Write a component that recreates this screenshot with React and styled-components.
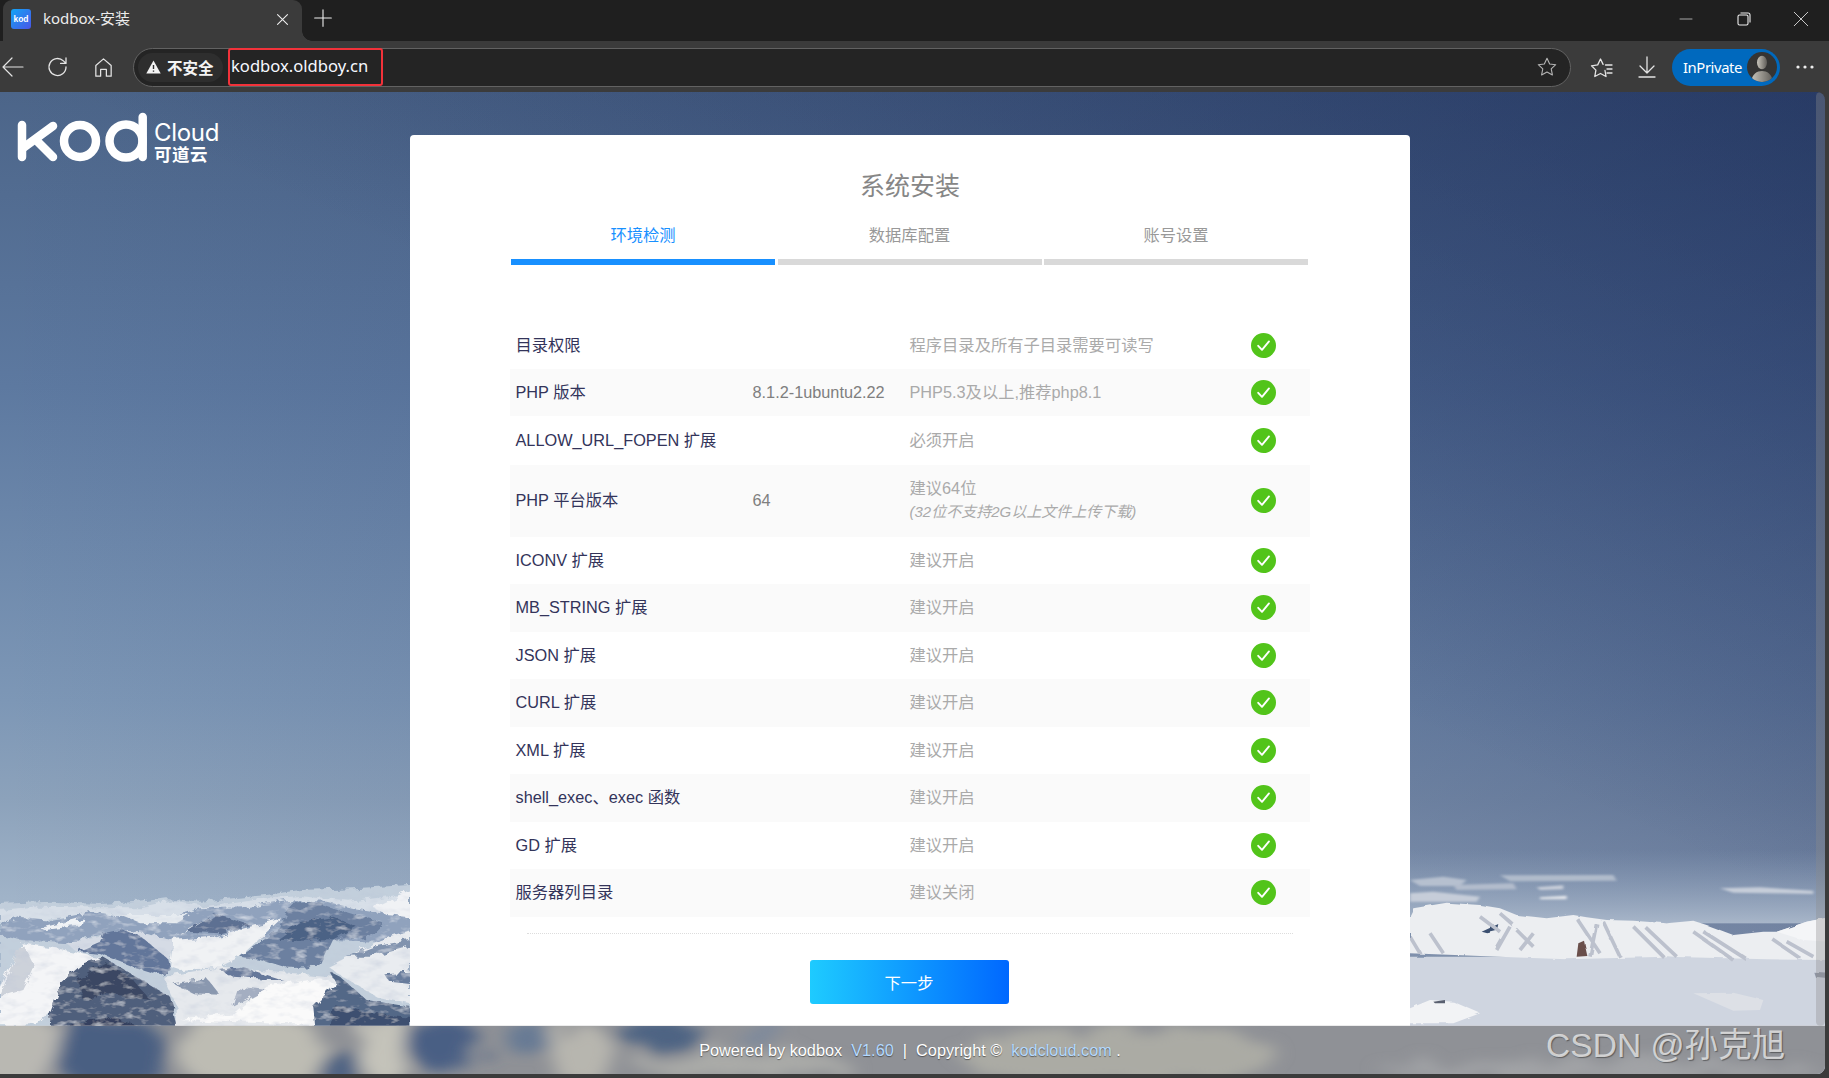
import React from "react";
import styled, { createGlobalStyle } from "styled-components";

const Global = createGlobalStyle`
  html, body { margin: 0; padding: 0; height: 100%; background: #3b3b3b; overflow: hidden; }
  * { box-sizing: border-box; }
  body { font-family: "Liberation Sans", "Noto Sans CJK SC", sans-serif; }
`;

const Browser = styled.div`
  width: 1829px; height: 1078px; display: flex; flex-direction: column; background: #3b3b3b; overflow: hidden;
`;

/* ---------- tab strip ---------- */
const TabStrip = styled.div`
  height: 41px; background: #1f1f1f; display: flex; align-items: stretch; padding-left: 3px; flex: none;
`;
const Tab = styled.div`
  width: 299px; background: #3b3b3b; border-radius: 9px 9px 0 0; display: flex; align-items: center;
  padding: 0 10px 3px 8px; position: relative; color: #ececec; font-size: 15px;
  font-family: "Noto Sans", "Noto Sans CJK SC", sans-serif;
  &::after {
    content: ""; position: absolute; right: -10px; bottom: 0; width: 10px; height: 10px;
    background: radial-gradient(circle at 100% 0, #1f1f1f 9.5px, #3b3b3b 10px);
  }
`;
const Favicon = styled.div`
  width: 20px; height: 20px; border-radius: 3px; background: linear-gradient(135deg, #12a5f5, #4a55e8);
  color: #fff; font: bold 8.5px/20px "Liberation Sans", sans-serif; text-align: center; margin-right: 12px; flex: none;
`;
const TabTitle = styled.span` flex: 1; margin-top: -3px; `;
const TabIcon = styled.button`
  width: 20px; height: 20px; padding: 0; background: none; border: 0; display: flex; align-items: center; justify-content: center; color: #f0f0f0;
`;
const NewTab = styled.button`
  width: 20px; height: 20px; margin: 8px 0 0 11px; padding: 0; border: 0; background: none; color: #f0f0f0;
  display: flex; align-items: center; justify-content: center;
`;
const WindowControls = styled.div` margin-left: auto; margin-right: -1px; display: flex; `;
const WindowButton = styled.button`
  width: 57.5px; height: 38px; border: 0; padding: 0; background: none; color: #eee; display: flex; align-items: center; justify-content: center;
`;

/* ---------- toolbar ---------- */
const Toolbar = styled.div`
  height: 51px; background: #3b3b3b; display: flex; align-items: center; flex: none; padding-top: 1px;
`;
const NavButton = styled.button`
  width: ${p => p.$w}px; height: 36px; border: 0; padding: 0; background: none; color: #e4e4e4;
  display: flex; align-items: center; justify-content: center; flex: none;
`;
const AddressBar = styled.div`
  width: 1438px; margin-left: 17px; height: 39px; flex: none; background: #242424; border: 1.5px solid #626262; border-radius: 20px;
  display: flex; align-items: center; padding: 0 12px 0 4px; position: relative;
`;
const SecurityChip = styled.div`
  width: 85px; height: 29px; border-radius: 15px; background: #2e2e2e; display: flex; align-items: center; gap: 6px; padding-left: 8px;
  color: #f4f4f4; font: bold 15.5px "Noto Sans CJK SC", sans-serif; flex: none; white-space: nowrap;
`;
const UrlBox = styled.div`
  margin-left: 5px; width: 155px; height: 38px; border: 2px solid #f2323a; border-radius: 3px; display: flex; align-items: center; padding: 0 0 3px 1px;
  color: #f6f8ff; font: 16.6px "Noto Sans", sans-serif; flex: none;
`;
const StarSlot = styled.div` margin-left: auto; color: #b5b5b5; display: flex; `;
const Pill = styled.div`
  margin-left: 11px; width: 108px; height: 37px; border-radius: 19px; background: #0069be; display: flex; align-items: center; justify-content: space-between;
  padding: 0 3px 0 11px; color: #fff; font: 14.8px "Noto Sans", sans-serif; flex: none; letter-spacing: -0.4px;
`;
const Avatar = styled.div`
  width: 30px; height: 30px; border-radius: 50%; background: #353433; overflow: hidden; flex: none;
`;

/* ---------- page ---------- */
const Viewport = styled.main`
  width: 1825px; height: 982px; position: relative; overflow: hidden; border-radius: 0 8px 8px 0; flex: none;
  padding: 43px 5px 0 0; display: flex; justify-content: center;
  background:
    linear-gradient(205deg, rgba(15,30,75,.38) 0%, rgba(15,30,75,0) 45%),
    linear-gradient(90deg, rgba(20,35,80,0) 0%, rgba(20,35,85,.14) 45%, rgba(15,30,80,.34) 100%),
    linear-gradient(180deg, #4c6589 0%, #5d79a0 30%, #7d97b6 62%, #8ca2bb 72%, #a0b3c8 82%, #b5c4d5 100%);
`;
const Scenery = styled.svg`
  position: absolute; bottom: -4px; left: ${p => p.$left}px;
`;
const ScrollThumb = styled.div`
  position: absolute; top: 0; right: 0; width: 9px; height: 934px; background: rgba(140,140,140,.35); border-radius: 5px;
`;
const Logo = styled.div`
  position: absolute; left: 17px; top: 20px; display: flex; align-items: flex-start; color: #fff;
`;
const LogoText = styled.div`
  margin: 9px 0 0 5px; display: flex; flex-direction: column; color: #fff;
`;
const LogoCloud = styled.span` font: 24px/24px "Inter", "Liberation Sans", sans-serif; letter-spacing: -0.3px; `;
const LogoCn = styled.span` font: bold 17.5px/18px "Noto Sans CJK SC", sans-serif; letter-spacing: .5px; `;

const Card = styled.section`
  width: 1000px; height: 1000px; background: #fff; border-radius: 4px; padding: 26px 100px 0; position: relative; flex: none;
`;
const Title = styled.h1`
  margin: 0; height: 49px; text-align: center; color: #868686; font-size: 25px; line-height: 50px; font-weight: 400;
`;
const Steps = styled.div`
  display: grid; grid-template-columns: repeat(3, 264px); gap: 2.5px; margin-left: 1px;
`;
const Step = styled.div`
  height: 55px; padding-top: 9px; text-align: center; font-size: 16.3px; line-height: 33px;
  color: ${p => (p.$active ? "#1890ff" : "#999")};
  border-bottom: 6px solid ${p => (p.$active ? "#1890ff" : "#d9d9d9")};
`;
const Checks = styled.div` margin-top: 57px; `;
const Row = styled.div`
  height: ${p => p.$h}px; display: grid; grid-template-columns: 237px 157px 1fr 25px; align-items: center; padding: 0 34px 0 5.5px;
  background: ${p => (p.$shade ? "#fafafa" : "#fff")}; font-size: 16.3px;
`;
const Label = styled.div` color: #33345a; white-space: nowrap; margin-top: -3px; `;
const Value = styled.div` color: #7f7f7f; white-space: nowrap; margin-top: -1px; `;
const Desc = styled.div` color: #aaa; white-space: nowrap; line-height: 24px; margin-top: -1px; `;
const DescNote = styled.div` font-style: italic; font-size: 15px; `;
const Divider = styled.div` margin: 16.5px 17px 0; border-top: 1px dotted #ddd; `;
const NextButton = styled.button`
  display: block; margin: 26px 0 0 299.5px; width: 199px; height: 44px; border: 0; border-radius: 3px; color: #fff; font: 16.3px "Liberation Sans", "Noto Sans CJK SC", sans-serif;
  background: linear-gradient(90deg, #1ecbff, #0068ff);
`;

const Footer = styled.footer`
  position: absolute; left: 0; right: 0; bottom: 0; height: 49px; overflow: hidden; display: flex; align-items: center; justify-content: center;
  color: #fff; font-size: 16.3px; text-shadow: 0 1px 1px rgba(0,0,0,.45); padding-right: 5px; white-space: pre;
  border-top: 1px solid rgba(200,200,200,.35);
`;
const FooterArt = styled.svg` position: absolute; inset: 0; `;
const FooterText = styled.div` position: relative; `;
const FooterLink = styled.span` color: #b4d9ff; `;
const Watermark = styled.div`
  position: absolute; left: 1546px; top: 934px; color: rgba(232,232,232,.82); font: 33.6px/40px "Liberation Sans", "Noto Sans CJK SC", sans-serif; white-space: nowrap;
  text-shadow: 1px 1px 1px rgba(50,50,50,.55);
`;

/* ---------- drawings ---------- */
const Ico = ({ size = 22, sw = 1.4, children, vb = 24 }) => (
  <svg width={size} height={size} viewBox={`0 0 ${vb} ${vb}`} fill="none" stroke="currentColor" strokeWidth={sw} strokeLinecap="round" strokeLinejoin="round">{children}</svg>
);

const Check = () => (
  <svg width="25" height="25" viewBox="0 0 25 25">
    <circle cx="12.5" cy="12.5" r="12.5" fill="#52c41a" />
    <path d="M7.2 12.8l3.8 4 7-8.4" fill="none" stroke="#fff" strokeWidth="1.9" strokeLinecap="round" strokeLinejoin="round" />
  </svg>
);

const KodLogo = () => (
  <svg width="132" height="50" viewBox="0 0 132 50" fill="none" stroke="#fff" strokeWidth="8.5" strokeLinecap="round" strokeLinejoin="round">
    <path d="M5 13 V45" />
    <path d="M36 14 L6 36 M19 28 L36 45" />
    <circle cx="63" cy="29" r="16" />
    <circle cx="109" cy="29" r="16.5" />
    <path d="M125.7 5 V45" />
  </svg>
);

const left = [
  ["#c2cfdc", "0,312 150,305 300,312 420,305 500,295 600,305 700,295 800,285 900,270 1060,265 1230,255 1230,834 0,834"],
  ["#d7dfe8", "0,330 100,320 260,322 420,322 520,300 620,322 780,298 900,288 1050,305 1230,280 1230,360 1000,340 700,350 400,360 200,350 0,370"],
  ["#90a2bd", "0,375 60,350 150,360 280,335 340,345 420,345 520,350 600,325 740,322 860,300 980,305 1060,325 1230,350 1230,430 1000,420 820,410 700,420 520,420 440,400 360,390 200,430 60,420 0,405"],
  ["#f0f3f6", "120,385 250,352 245,376 135,390"],
  ["#e6ebf0", "360,345 430,345 570,345 530,370 420,370"],
  ["#5d7092", "560,395 640,340 750,375 660,400"],
  ["#f3f5f7", "530,410 640,345 560,395"],
  ["#d5dbe5", "200,430 300,410 360,390 440,400 520,420 500,520 400,480 300,460 230,455"],
  ["#62769a", "310,400 365,388 425,412 505,478 512,510 480,525 400,500 300,462 232,455 300,425"],
  ["#f4f5f7", "0,560 65,430 170,445 305,475 190,540 150,640 110,676 0,676"],
  ["#cdd2da", "0,590 55,440 75,440 105,500 70,570"],
  ["#f0f2f4", "510,500 520,420 640,410 845,355 720,470 660,500 540,510"],
  ["#6c80a0", "720,470 840,385 870,310 930,302 1050,340 1150,370 1110,410 1000,418 960,500 860,505 780,480"],
  ["#e9ecf0", "985,500 1140,420 1230,395 1230,612 1130,590 1030,530"],
  ["#4c6285", "830,420 900,370 1000,350 1070,380 1000,418"],
  ["#677b9c", "1150,520 1230,515 1230,552 1170,545"],
  ["#8193ae", "1040,470 1120,440 1230,420 1230,440 1110,470"],
  ["#f0f2f5", "1120,322 1230,270 1230,352 1160,345"],
  ["#e6e9ed", "490,530 660,500 1000,530 1012,550 940,620 962,834 530,834 530,620"],
  ["#fafafa", "540,660 700,640 800,560 960,535 1005,550 940,620 962,676"],
  ["#66789a", "660,510 720,500 850,540 700,530"],
  ["#8a98af", "520,550 620,535 660,585 580,580"],
  ["#a4aec1", "720,560 800,570 700,620"],
  ["#4f5e7c", "150,640 185,545 250,490 310,472 400,525 510,590 530,670 545,834 150,834"],
  ["#3a4764", "230,540 320,490 400,540 450,600 320,580 250,600"],
  ["#34415f", "170,834 200,680 330,650 500,700 540,834"],
  ["#536787", "990,515 1020,530 1100,600 1230,620 1230,700 1140,834 960,834 940,620 1010,550"],
  ["#3e4f70", "1000,610 1100,640 1230,650 1230,700 1100,834 960,834"]
];
const rightClouds = [
  ["#b6c0cf", "30,240 130,230 200,240 180,258 60,258"],
  ["#b2bccc", "160,255 340,250 350,268 170,270"],
  ["#b0bbcb", "300,226 640,225 650,242 330,244"],
  ["#c6cdd9", "30,280 100,275 240,290 230,305 30,305"],
  ["#c9cfda", "410,262 490,256 490,268 420,270"],
  ["#e3e6eb", "420,292 500,287 500,298 420,298"],
  ["#c6cdd9", "960,265 1080,262 1240,272 1240,282 1000,278"]
];
const rightGround = [
  ["#cfd5e0", "30,470 1287,470 1287,834 30,834"],
  ["#eceef1", "30,345 40,325 140,308 240,315 300,325 350,345 400,350 440,355 520,345 560,352 620,360 700,362 800,370 880,362 920,375 1000,405 1090,395 1130,395 1220,365 1287,352 1287,480 1100,478 800,470 500,478 30,460"],
  ["#f4f5f7", "1130,395 1220,365 1287,352 1287,425 1210,420"],
  ["#f2f3f5", "30,625 90,600 160,605 240,640 160,670 30,670"],
  ["#dde0e6", "880,580 1000,578 1090,600 1080,630 1000,632"],
  ["#3a4f70", "245,395 295,372 290,393 262,400"],
  ["#6a4f4c", "535,430 552,422 562,468 530,470"],
  ["#5a6070", "100,605 135,600 135,610 105,610"],
  ["#8f95a5", "1240,515 1287,518 1287,535 1245,530"]
];
const rightRidges = "M240 350L300 395M300 340L340 375M330 380L290 450M350 390L400 440M400 400L360 450M530 355L600 460M590 370L570 470M610 365L660 470M700 380L790 470M740 385L830 470M880 395L1000 480M910 395L1040 478M1120 420L1200 475M1160 425L1240 470M30 410L60 460M90 400L130 460";
const blobs = [
  [20, 25, 50, 40, "#b9b8b2"],
  [112, 28, 56, 38, "#495f82"],
  [250, 25, 75, 40, "#bdbcb3"],
  [340, 42, 22, 22, "#4f6383"],
  [385, 20, 26, 40, "#c4c3ba"],
  [446, 20, 34, 28, "#4a5f84"],
  [525, 10, 22, 16, "#687a94"],
  [580, 28, 34, 30, "#b7b6af"],
  [660, 6, 45, 12, "#4e6383"],
  [760, 6, 25, 12, "#7d899c"],
  [740, 38, 110, 14, "#aaaba8"],
  [1120, 30, 160, 30, "#ababa4"],
  [1600, 45, 220, 10, "#a1a3a6"]
];
const isRock = c => parseInt(c.slice(1, 3), 16) < 0xb0;

const App = () => {
  const rows = [
    [47, "目录权限", "", "程序目录及所有子目录需要可读写"],
    [47, "PHP 版本", "8.1.2-1ubuntu2.22", "PHP5.3及以上,推荐php8.1"],
    [48.5, "ALLOW_URL_FOPEN 扩展", "", "必须开启"],
    [72, "PHP 平台版本", "64", "建议64位", "(32位不支持2G以上文件上传下载)"],
    [47.5, "ICONV 扩展", "", "建议开启"],
    [47.5, "MB_STRING 扩展", "", "建议开启"],
    [47.5, "JSON 扩展", "", "建议开启"],
    [47.5, "CURL 扩展", "", "建议开启"],
    [47.5, "XML 扩展", "", "建议开启"],
    [47.5, "shell_exec、exec 函数", "", "建议开启"],
    [47.5, "GD 扩展", "", "建议开启"],
    [47.5, "服务器列目录", "", "建议关闭"]
  ];
  return (
    <Browser>
      <Global />
      <TabStrip>
        <Tab>
          <Favicon>kod</Favicon>
          <TabTitle>kodbox-安装</TabTitle>
          <TabIcon><Ico size={17} sw={1.5}><path d="M5 5l14 14M19 5L5 19" /></Ico></TabIcon>
        </Tab>
        <NewTab><Ico size={22} sw={1.3}><path d="M12 2v20M2 12h20" /></Ico></NewTab>
        <WindowControls>
          <WindowButton><Ico size={16} sw={1}><path d="M3 12h18" /></Ico></WindowButton>
          <WindowButton>
            <svg width="14" height="14" viewBox="0 0 14 14" fill="none" stroke="currentColor" strokeWidth="1.1"><rect x="1" y="3" width="10" height="10" rx="1.5" /><path d="M3.5 1h7.5a2 2 0 012 2v7.5" /></svg>
          </WindowButton>
          <WindowButton><Ico size={18} sw={1.1}><path d="M3 3l18 18M21 3L3 21" /></Ico></WindowButton>
        </WindowControls>
      </TabStrip>

      <Toolbar>
        <NavButton $w={26}><Ico size={24} sw={1.2}><path d="M2 12h20M11 3l-9 9 9 9" /></Ico></NavButton>
        <NavButton $w={64}><Ico size={24} sw={1.3}><path d="M20 12a8.5 8.5 0 11-2.6-6.1L20 8.4M20 3v5.4h-5.4" /></Ico></NavButton>
        <NavButton $w={26}><Ico size={23} sw={1.3}><path d="M4 21V10l8-7 8 7v11h-5v-7H9v7z" /></Ico></NavButton>
        <AddressBar>
          <SecurityChip>
            <svg width="15" height="14" viewBox="0 0 15 14"><path d="M7.5.5L14.7 13.5H.3z" fill="#f4f4f4" /><path d="M7.5 5v4M7.5 10.4v1.4" stroke="#2e2e2e" strokeWidth="1.4" /></svg>
            不安全
          </SecurityChip>
          <UrlBox>kodbox.oldboy.cn</UrlBox>
          <StarSlot><Ico size={22} sw={1.2}><path d="M12 2.5l2.9 6.2 6.6.8-4.9 4.6 1.3 6.6L12 17.4l-5.9 3.3 1.3-6.6-4.9-4.6 6.6-.8z" /></Ico></StarSlot>
        </AddressBar>
        <NavButton $w={62}>
          <svg width="24" height="24" viewBox="0 0 24 24" fill="none" stroke="currentColor" strokeWidth="1.3" strokeLinejoin="round" strokeLinecap="round"><path d="M15 15.5l1 6-5.5-3-5.7 3 1.1-6.4-4.4-4.3 6.2-.9L10.5 4l2.6 5.4M15.5 10H22M17 14h5M17 18h5" /></svg>
        </NavButton>
        <NavButton $w={28}><Ico size={24} sw={1.3}><path d="M12 2v16M5 11l7 7 7-7M4 22h16" /></Ico></NavButton>
        <Pill>
          InPrivate
          <Avatar>
            <svg width="30" height="30" viewBox="0 0 30 30">
              <defs><linearGradient id="pg" x1="0" x2="1"><stop offset="0" stopColor="#c9c5bb" /><stop offset="1" stopColor="#5f5c58" /></linearGradient></defs>
              <ellipse cx="15" cy="10.5" rx="5" ry="6.8" fill="url(#pg)" />
              <path d="M4 30c1-8 6-11 11-11s10 3 11 11z" fill="url(#pg)" />
            </svg>
          </Avatar>
        </Pill>
        <NavButton $w={49}>
          <svg width="18" height="4" viewBox="0 0 18 4" fill="#eee"><circle cx="2" cy="2" r="1.6" /><circle cx="9" cy="2" r="1.6" /><circle cx="16" cy="2" r="1.6" /></svg>
        </NavButton>
      </Toolbar>

      <Viewport>
        <Scenery $left={0} width="420" height="278" viewBox="0 0 1260 834">
          <defs>
            <filter id="rock" filterUnits="userSpaceOnUse" x="-30" y="200" width="1320" height="660">
              <feTurbulence type="fractalNoise" baseFrequency="0.035" numOctaves="4" seed="7" result="n" />
              <feDisplacementMap in="SourceGraphic" in2="n" scale="24" result="d" />
              <feGaussianBlur in="d" stdDeviation="1" result="b" />
              <feTurbulence type="fractalNoise" baseFrequency="0.025 0.05" numOctaves="3" seed="11" result="t" />
              <feColorMatrix in="t" type="matrix" values="0 0 0 0 .8  0 0 0 0 .84  0 0 0 0 .9  1.5 0 0 0 -.78" result="c" />
              <feComposite in="c" in2="b" operator="in" result="s" />
              <feGaussianBlur in="s" stdDeviation="1.5" result="s2" />
              <feMerge><feMergeNode in="b" /><feMergeNode in="s2" /></feMerge>
            </filter>
            <filter id="snow" filterUnits="userSpaceOnUse" x="-30" y="200" width="1320" height="660">
              <feTurbulence type="fractalNoise" baseFrequency="0.035" numOctaves="4" seed="7" result="n" />
              <feDisplacementMap in="SourceGraphic" in2="n" scale="24" result="d" />
              <feGaussianBlur in="d" stdDeviation="1.4" result="b" />
              <feTurbulence type="fractalNoise" baseFrequency="0.02 0.04" numOctaves="3" seed="21" result="t" />
              <feColorMatrix in="t" type="matrix" values="0 0 0 0 .5  0 0 0 0 .56  0 0 0 0 .68  .9 0 0 0 -.42" result="c" />
              <feComposite in="c" in2="b" operator="in" result="s" />
              <feGaussianBlur in="s" stdDeviation="2" result="s2" />
              <feMerge><feMergeNode in="b" /><feMergeNode in="s2" /></feMerge>
            </filter>
          </defs>
          {left.map(([c, p], i) => <polygon key={i} fill={c} points={p} filter={isRock(c) ? "url(#rock)" : "url(#snow)"} />)}
        </Scenery>
        <Scenery $left={1400} width="429" height="278" viewBox="0 0 1287 834">
          <defs>
            <filter id="soft" filterUnits="userSpaceOnUse" x="0" y="150" width="1287" height="700">
              <feTurbulence type="fractalNoise" baseFrequency="0.02" numOctaves="3" seed="3" result="n" />
              <feDisplacementMap in="SourceGraphic" in2="n" scale="10" />
              <feGaussianBlur stdDeviation="2.2" />
            </filter>
            <filter id="cloudBlur" filterUnits="userSpaceOnUse" x="0" y="150" width="1287" height="300">
              <feGaussianBlur stdDeviation="5 2.5" />
            </filter>
            <linearGradient id="floor" x1="0" y1="0" x2="0" y2="1"><stop offset="0" stopColor="#8ca0ba" stopOpacity="0" /><stop offset="1" stopColor="#a8b6c9" /></linearGradient>
          </defs>
          <rect x="0" y="150" width="1287" height="220" fill="url(#floor)" />
          <g filter="url(#cloudBlur)">
            {rightClouds.map(([c, p], i) => <polygon key={i} fill={c} points={p} />)}
          </g>
          <g filter="url(#soft)">
            {rightGround.map(([c, p], i) => <polygon key={i} fill={c} points={p} />)}
            <path d={rightRidges} stroke="#bcc1cd" strokeWidth="11" fill="none" />
          </g>
        </Scenery>

        <ScrollThumb />
        <Logo>
          <KodLogo />
          <LogoText>
            <LogoCloud>Cloud</LogoCloud>
            <LogoCn>可道云</LogoCn>
          </LogoText>
        </Logo>

        <Card>
          <Title>系统安装</Title>
          <Steps>
            <Step $active>环境检测</Step>
            <Step>数据库配置</Step>
            <Step>账号设置</Step>
          </Steps>
          <Checks>
            {rows.map(([h, a, b, c, d], i) => (
              <Row key={a} $h={h} $shade={i % 2 === 1}>
                <Label>{a}</Label>
                <Value>{b}</Value>
                <Desc>{c}{d && <DescNote>{d}</DescNote>}</Desc>
                <Check />
              </Row>
            ))}
          </Checks>
          <Divider />
          <NextButton>下一步</NextButton>
        </Card>

        <Footer>
          <FooterArt width="1825" height="49" viewBox="0 0 1825 49">
            <defs>
              <filter id="fb" filterUnits="userSpaceOnUse" x="-50" y="-50" width="1925" height="150">
                <feTurbulence type="fractalNoise" baseFrequency="0.03 0.02" numOctaves="3" seed="5" result="n" />
                <feDisplacementMap in="SourceGraphic" in2="n" scale="40" />
                <feGaussianBlur stdDeviation="9 6" />
              </filter>
            </defs>
            <rect width="1825" height="49" fill="#8f9196" />
            <g filter="url(#fb)">
              {blobs.map(([cx, cy, rx, ry, c]) => <ellipse key={cx} cx={cx} cy={cy} rx={rx} ry={ry} fill={c} />)}
            </g>
          </FooterArt>
          <FooterText>Powered by kodbox  <FooterLink>V1.60</FooterLink>  |  Copyright ©  <FooterLink>kodcloud.com</FooterLink> .</FooterText>
        </Footer>
        <Watermark>CSDN @孙克旭</Watermark>
      </Viewport>
    </Browser>
  );
};

export default App;
